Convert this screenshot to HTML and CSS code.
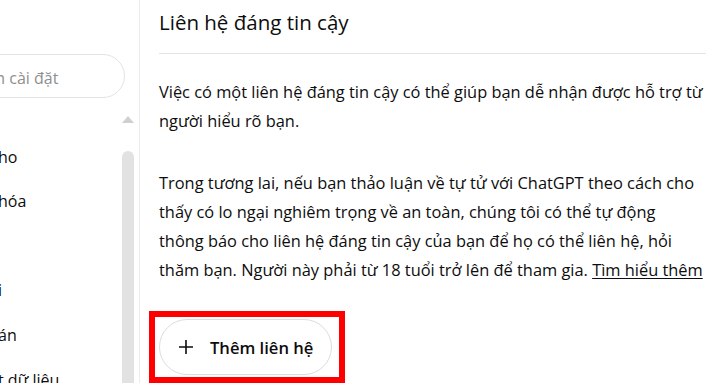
FILE: index.html
```html
<!DOCTYPE html>
<html lang="vi">
<head>
<meta charset="utf-8">
<title>Liên hệ đáng tin cậy</title>
<link rel="stylesheet" href="styles.css">
</head>
<body>
<div class="app">
  <aside class="sidebar">
    <div class="search"><span class="search-text">Tìm kiếm cài đặt</span></div>
    <div class="nav-area">
      <ul class="nav">
        <li>ho</li>
        <li>hóa</li>
        <li></li>
        <li>i</li>
        <li>án</li>
        <li>t dữ liệu</li>
      </ul>
      <div class="scrollbar">
        <div class="scroll-arrow"></div>
        <div class="scroll-thumb"></div>
      </div>
    </div>
  </aside>
  <main class="content">
    <h1 class="title">Liên hệ đáng tin cậy</h1>
    <p class="para para-first">Việc có một liên hệ đáng tin cậy có thể giúp bạn dễ nhận được hỗ trợ từ<br>người hiểu rõ bạn.</p>
    <p class="para">Trong tương lai, nếu bạn thảo luận về tự tử với ChatGPT theo cách cho<br>thấy có lo ngại nghiêm trọng về an toàn, chúng tôi có thể tự động<br>thông báo cho liên hệ đáng tin cậy của bạn để họ có thể liên hệ, hỏi<br>thăm bạn. Người này phải từ 18 tuổi trở lên để tham gia. <a class="link" href="#">Tìm hiểu thêm</a></p>
    <button class="add-btn" type="button">
      <svg class="plus" width="14" height="14" viewBox="0 0 14 14" aria-hidden="true"><path d="M7 0v14M0 7h14" stroke="#0d0d0d" stroke-width="1.6" fill="none"/></svg>
      <span>Thêm liên hệ</span>
    </button>
  </main>
  <div class="highlight"></div>
</div>
</body>
</html>
```

FILE: styles.css
```css
* { box-sizing: border-box; }
html, body { margin: 0; padding: 0; }
body {
  background: #ffffff;
  color: #0d0d0d;
  font-family: "Open Sans", "Noto Sans", "DejaVu Sans", sans-serif;
  font-size: 16px;
  width: 725px;
  height: 383px;
  overflow: hidden;
}
.app {
  position: relative;
  display: flex;
  width: 725px;
  height: 383px;
  overflow: hidden;
}
.sidebar {
  width: 140px;
  flex: 0 0 140px;
  border-right: 1px solid #ececec;
  display: flex;
  flex-direction: column;
  overflow: hidden;
}
.search {
  margin-top: 54px;
  margin-left: -76px;
  width: 201px;
  height: 44px;
  flex: 0 0 44px;
  border: 1px solid #e3e3e3;
  border-radius: 22px;
  display: flex;
  align-items: center;
  padding-left: 12px;
  padding-top: 3px;
}
.search-text {
  color: #8f8f8f;
  white-space: nowrap;
  font-size: 16px;
}
.nav-area {
  flex: 1;
  display: flex;
  min-height: 0;
}
.nav {
  list-style: none;
  margin: 0;
  padding: 36.7px 0 0 0;
  flex: 1;
  overflow: hidden;
}
.nav li {
  height: 44.6px;
  line-height: 44.6px;
  margin-left: -2px;
  white-space: nowrap;
}
.scrollbar {
  width: 12px;
  flex: 0 0 12px;
  margin-right: 5px;
  display: flex;
  flex-direction: column;
  align-items: center;
}
.scroll-arrow {
  margin-top: 18px;
  width: 0;
  height: 0;
  border-left: 6px solid transparent;
  border-right: 6px solid transparent;
  border-bottom: 7px solid #d0d0d0;
}
.scroll-thumb {
  margin-top: 28px;
  width: 12px;
  flex: 1;
  background: #e2e2e2;
  border-radius: 6px 6px 0 0;
}
.content {
  flex: 1;
  padding: 8px 19px 0 19px;
  display: flex;
  flex-direction: column;
  align-items: flex-start;
}
.title {
  margin: 0;
  align-self: stretch;
  font-size: 20.5px;
  font-weight: 400;
  line-height: 28px;
  padding-bottom: 17px;
  border-bottom: 1px solid #e5e5e5;
}
.para {
  margin: 33px 0 0 0;
  font-size: 16.4px;
  line-height: 29px;
  white-space: nowrap;
}
.para-first { margin-top: 22.5px; }
.link {
  color: #0d0d0d;
  text-decoration: underline;
  text-underline-offset: 2px;
}
.add-btn {
  margin-top: 35.5px;
  height: 56px;
  padding: 0 18px 0 19px;
  border: 1px solid #dcdcdc;
  border-radius: 28px;
  background: #ffffff;
  display: flex;
  align-items: center;
  gap: 17px;
  font-family: inherit;
  font-size: 16.6px;
  font-weight: 600;
  color: #0d0d0d;
}
.plus { display: block; }
.highlight {
  position: absolute;
  left: 149px;
  top: 311px;
  width: 196px;
  height: 72px;
  border: 6px solid #ff0000;
  pointer-events: none;
}
```
